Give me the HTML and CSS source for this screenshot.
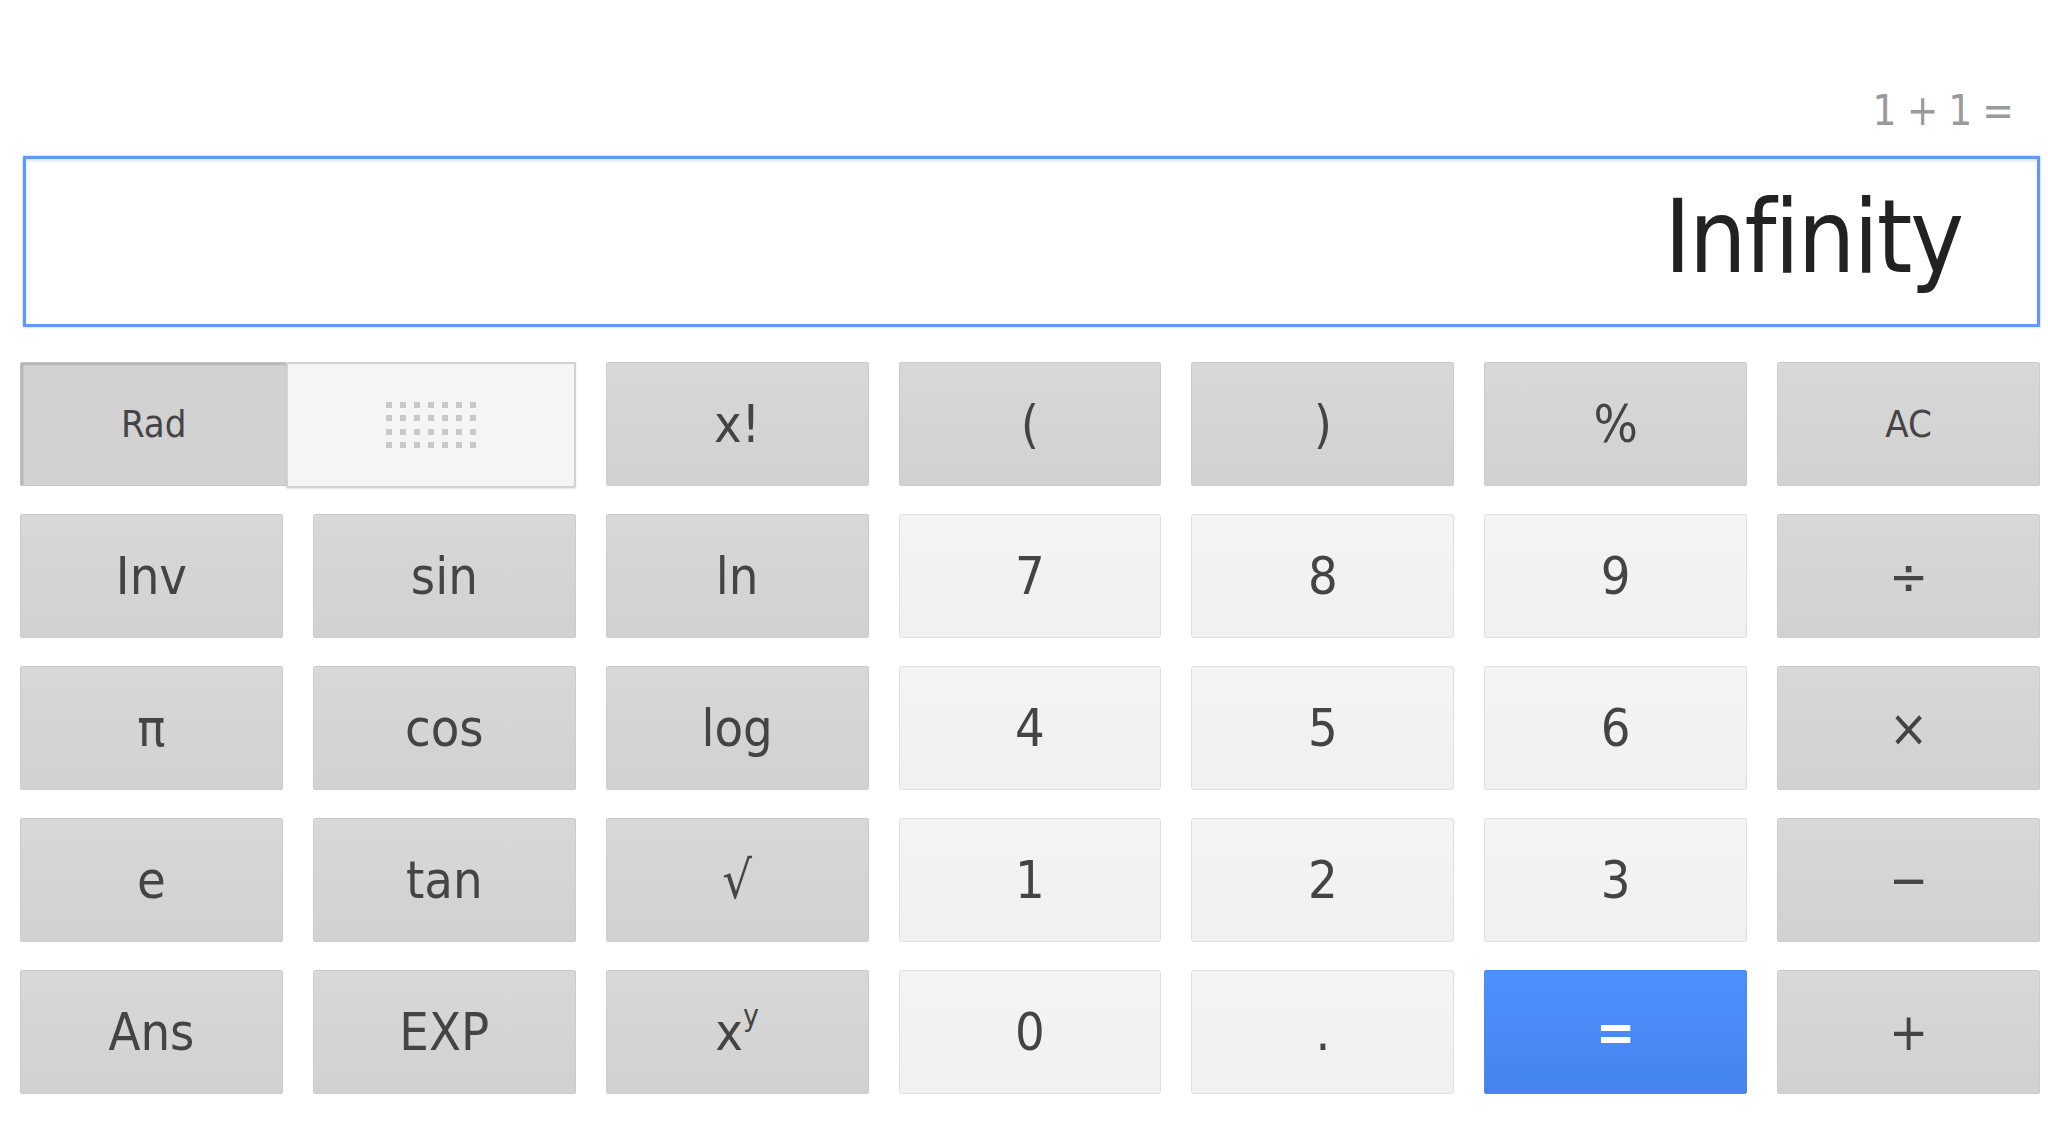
FILE: index.html
```html
<!DOCTYPE html>
<html lang="en">
<head>
    <meta charset="UTF-8">
    <meta name="viewport" content="width=device-width, initial-scale=1.0">
    <title>Calculator</title>
    <link rel="stylesheet" href="styles.css">
</head>
<body>
    <div class="calc">
        <div class="expr">1 + 1 =</div>
        <div class="display">Infinity</div>
        <div class="keys">
            <div class="toggle">
                <button class="seg seg-rad">Rad</button>
                <button class="seg seg-deg">
                    <svg width="90" height="46" viewBox="0 0 90 46">
                        <g fill="#c9c9c9">
                            <rect x="0" y="0" width="6" height="6"/><rect x="14" y="0" width="6" height="6"/><rect x="28" y="0" width="6" height="6"/><rect x="42" y="0" width="6" height="6"/><rect x="56" y="0" width="6" height="6"/><rect x="70" y="0" width="6" height="6"/><rect x="84" y="0" width="6" height="6"/>
                            <rect x="0" y="13" width="6" height="6"/><rect x="14" y="13" width="6" height="6"/><rect x="28" y="13" width="6" height="6"/><rect x="42" y="13" width="6" height="6"/><rect x="56" y="13" width="6" height="6"/><rect x="70" y="13" width="6" height="6"/><rect x="84" y="13" width="6" height="6"/>
                            <rect x="0" y="27" width="6" height="6"/><rect x="14" y="27" width="6" height="6"/><rect x="28" y="27" width="6" height="6"/><rect x="42" y="27" width="6" height="6"/><rect x="56" y="27" width="6" height="6"/><rect x="70" y="27" width="6" height="6"/><rect x="84" y="27" width="6" height="6"/>
                            <rect x="0" y="40" width="6" height="6"/><rect x="14" y="40" width="6" height="6"/><rect x="28" y="40" width="6" height="6"/><rect x="42" y="40" width="6" height="6"/><rect x="56" y="40" width="6" height="6"/><rect x="70" y="40" width="6" height="6"/><rect x="84" y="40" width="6" height="6"/>
                        </g>
                    </svg>
                </button>
            </div>
            <button class="key fn">x!</button>
            <button class="key fn">(</button>
            <button class="key fn">)</button>
            <button class="key fn">%</button>
            <button class="key fn small">AC</button>

            <button class="key fn">Inv</button>
            <button class="key fn">sin</button>
            <button class="key fn">ln</button>
            <button class="key num">7</button>
            <button class="key num">8</button>
            <button class="key num">9</button>
            <button class="key fn">&divide;</button>

            <button class="key fn">&pi;</button>
            <button class="key fn">cos</button>
            <button class="key fn">log</button>
            <button class="key num">4</button>
            <button class="key num">5</button>
            <button class="key num">6</button>
            <button class="key fn">&times;</button>

            <button class="key fn">e</button>
            <button class="key fn">tan</button>
            <button class="key fn">&radic;</button>
            <button class="key num">1</button>
            <button class="key num">2</button>
            <button class="key num">3</button>
            <button class="key fn">&minus;</button>

            <button class="key fn">Ans</button>
            <button class="key fn">EXP</button>
            <button class="key fn"><span>x<sup>y</sup></span></button>
            <button class="key num">0</button>
            <button class="key num">.</button>
            <button class="key equals">=</button>
            <button class="key fn">+</button>
        </div>
    </div>
</body>
</html>
```

FILE: styles.css
```css
body {
    margin: 0;
    background-color: #fff;
    font-family: "DejaVu Sans Condensed", "DejaVu Sans", sans-serif;
    font-stretch: condensed;
}

.calc {
    padding: 0 8px 0 20px;
}

.expr {
    margin-top: 90px;
    height: 42px;
    line-height: 42px;
    font-size: 42px;
    letter-spacing: -1px;
    color: #9a9a9a;
    text-align: right;
    padding-right: 27px;
}

.display {
    margin: 24px 0 0 3px;
    border: 3px solid #6199f8;
    box-shadow: 0 0 2px rgba(77, 144, 254, 0.6), inset 0 2px 3px rgba(0, 0, 0, 0.12);
    background-color: #fff;
    font-size: 101px;
    letter-spacing: -2px;
    line-height: 157px;
    padding: 0 75px 8px 0;
    text-align: right;
    color: #222;
}

.keys {
    display: grid;
    grid-template-columns: repeat(7, 1fr);
    grid-auto-rows: 124px;
    gap: 28px 30px;
    margin-top: 35px;
}

button {
    font-family: inherit;
    font-stretch: condensed;
    margin: 0;
    padding: 0;
    cursor: pointer;
}

.key {
    display: flex;
    justify-content: center;
    align-items: center;
    font-size: 52px;
    color: #444;
    border-radius: 2px;
}

.fn {
    background: linear-gradient(#d8d8d8, #d1d1d1);
    border: 1px solid #cbcbcb;
}

.num {
    background: linear-gradient(#f4f4f4, #f0f0f0);
    border: 1px solid #e0e0e0;
}

.small {
    font-size: 38px;
}

.equals {
    background: linear-gradient(#4d90fe, #4584ee);
    border: 1px solid #4a89f4;
    color: #fff;
    font-weight: bold;
}

.key sup {
    font-size: 30px;
    line-height: 0;
    vertical-align: 24px;
}

.toggle {
    grid-column: span 2;
    display: flex;
}

.seg {
    display: flex;
    justify-content: center;
    align-items: center;
}

.seg-rad {
    flex: 268;
    background-color: #d2d2d2;
    border: 1px solid #c4c4c4;
    border-right: none;
    box-shadow: inset 2px 2px 2px rgba(0, 0, 0, 0.15);
    font-size: 38px;
    color: #444;
    border-radius: 2px 0 0 2px;
}

.seg-deg {
    flex: 288;
    background-color: #f5f5f5;
    border: 2px solid #d2d2d2;
    box-shadow: 0 1px 2px rgba(0, 0, 0, 0.12);
    border-radius: 2px;
    margin-bottom: -2px;
}
```
